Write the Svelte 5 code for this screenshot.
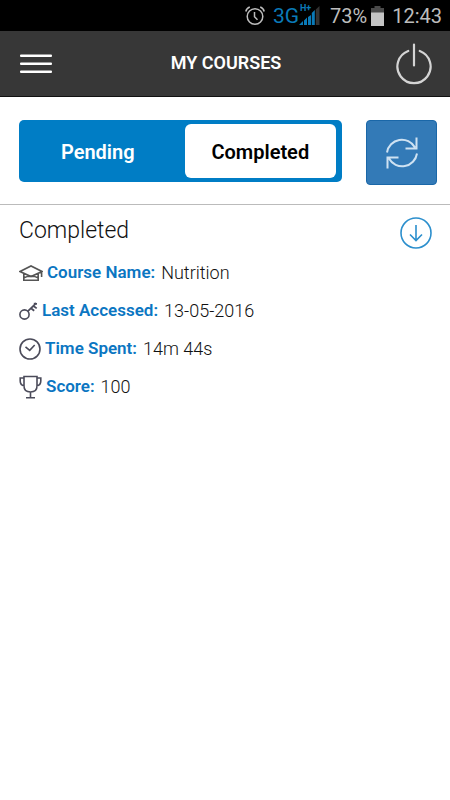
<script lang="ts">
  type Tab = "Pending" | "Completed";

  const tabs: Tab[] = ["Pending", "Completed"];

  const details = [
    { icon: "cap", label: "Course Name", value: "Nutrition" },
    { icon: "key", label: "Last Accessed", value: "13-05-2016" },
    { icon: "clock", label: "Time Spent", value: "14m 44s" },
    { icon: "trophy", label: "Score", value: "100" },
  ];

  let active = $state<Tab>("Completed");
</script>

<div class="status-bar">
  <svg class="alarm" width="20" height="20" viewBox="0 0 20 20" aria-hidden="true">
    <circle cx="10" cy="10.5" r="7.8" />
    <path d="M9.500 6v4.800l3 3M.8 5.500a6 6 0 0 1 4-4.500M19.200 5.500a6 6 0 0 0-4-4.500" />
  </svg>
  <div class="network">
    <span class="network-type">3G</span>
    <svg width="21" height="20" viewBox="0 0 21 20" aria-hidden="true">
      <path class="bar-on" d="M0 19l4-4v4zM5 14.500l3-3V19H5zM9 11l3-2V19H9zM12.800 7L15.800 4v15h-3z" />
      <path class="bar-off" d="M16.800 3.500L20.500 0v19h-3.700z" />
    </svg>
    <span class="network-mode">H+</span>
  </div>
  <span class="battery-level">73%</span>
  <svg class="battery" width="13" height="20" viewBox="0 0 13 20" aria-hidden="true">
    <path class="empty" d="M3.500 0h6v2H13v5H0V2h3.500z" />
    <path class="full" d="M0 6.500h13V20H0z" />
  </svg>
  <span>12:43</span>
</div>

<header>
  <button type="button" class="icon-btn" aria-label="Menu">
    <svg width="32" height="20" viewBox="0 0 32 20" fill="#fff">
      <rect y="0.500" width="32" height="2.600" rx="1" />
      <rect y="8.500" width="32" height="2.600" rx="1" />
      <rect y="16.500" width="32" height="2.600" rx="1" />
    </svg>
  </button>
  <h1>MY COURSES</h1>
  <button type="button" class="icon-btn" aria-label="Log out">
    <svg width="36" height="42" viewBox="0 0 36 42" fill="none" stroke="#d4d4d4" stroke-width="2.200" stroke-linecap="round">
      <path d="M18 1.500v21M12.200 8A16.600 16.600 0 1 0 23.800 8" />
    </svg>
  </button>
</header>

<div class="toolbar">
  <div class="toggle">
    {#each tabs as tab}
      <button
        type="button"
        class="tab"
        class:active={active === tab}
        aria-pressed={active === tab}
        onclick={() => (active = tab)}
      >
        {tab}
      </button>
    {/each}
  </div>
  <button type="button" class="refresh" aria-label="Refresh">
    <svg width="34" height="34" viewBox="0 0 34 34" fill="none" stroke="#cfe2f2" stroke-width="2">
      <path d="M2 16.500A15 15 0 0 1 30 11.500M31.500 1.500v11H20.500M32 17.500A15 15 0 0 1 4 22.500M2.500 32.500v-11h11" />
    </svg>
  </button>
</div>

<main>
  <div class="section-head">
    <h2>{active}</h2>
    {#if active === "Completed"}
      <button type="button" class="icon-btn" aria-label="Download">
        <svg width="32" height="32" viewBox="0 0 32 32" fill="none" stroke="#2c8fcd">
          <circle cx="16" cy="16" r="15" stroke-width="1.600" />
          <path d="M16 8v15.500M10 17.500l6 6 6-6" stroke-width="1.600" />
        </svg>
      </button>
    {/if}
  </div>

  {#if active === "Completed"}
    <ul class="details">
      {#each details as item}
        <li>
          {#if item.icon === "cap"}
            <svg width="24" height="18" viewBox="0 0 24 18" aria-hidden="true">
              <path d="M1 7.500L12 2l11 5.500-11 5zM4.800 9.500V16.200h14.400V9.500M5 13.800c3.500-2 10.500-2 14 0M22.600 7.500v5.500" stroke="#555" />
            </svg>
          {:else if item.icon === "key"}
            <svg width="19" height="20" viewBox="0 0 19 20" aria-hidden="true">
              <circle cx="5.500" cy="13.500" r="4.600" />
              <path d="M8.700 10.300L17.200 2.200M12 7.200l3.200 2.600M14.500 5l3.200 2.400M14.800 2.700l3.200.200" stroke-width="1.800" />
            </svg>
          {:else if item.icon === "clock"}
            <svg width="22" height="22" viewBox="0 0 22 22" aria-hidden="true">
              <circle cx="11" cy="11" r="10" />
              <path d="M6.500 8.800l4.200 3.500 5-5.300" />
            </svg>
          {:else}
            <svg width="23" height="24" viewBox="0 0 23 24" aria-hidden="true">
              <path d="M5 1.500h13v9.500c0 4-2.800 6-6.500 6S5 15 5 11zM5 3H1.200v3c0 3 1.300 4.500 4.200 5M18 3h3.800v3c0 3-1.300 4.500-4.200 5M11.500 17v5M7 22.800h9" />
            </svg>
          {/if}
          <strong>{item.label}:</strong>
          <span>{item.value}</span>
        </li>
      {/each}
    </ul>
  {:else}
    <p class="none">No pending courses</p>
  {/if}
</main>

<style>
  :global(body) {
    background: #fff;
    font-family: Roboto, "Liberation Sans", sans-serif;
    color: #111;
  }

  button {
    padding: 0;
    border: 0;
    background: none;
    font-family: inherit;
    cursor: pointer;
  }

  svg {
    display: block;
    flex: none;
  }

  h1,
  h2 {
    margin: 0;
  }

  .status-bar {
    display: flex;
    align-items: center;
    justify-content: flex-end;
    gap: 8px;
    height: 31px;
    padding-right: 8px;
    background: #000;
    color: #bdbdbd;
    font-size: 20px;
  }

  .alarm {
    fill: none;
    stroke: #bdbdbd;
    stroke-width: 1.5;
  }

  .network {
    position: relative;
    display: flex;
    align-items: center;
    margin-right: 2px;
    color: #0a7ab8;
  }

  .network-type {
    font-size: 21px;
    line-height: 24px;
  }

  .network-mode {
    position: absolute;
    top: 0;
    left: 27px;
    font-size: 9px;
    font-weight: 700;
    line-height: 8px;
  }

  .bar-on {
    fill: #0a7ab8;
  }

  .bar-off {
    fill: #333;
  }

  .battery-level {
    margin-right: -4px;
  }

  .empty {
    fill: #4a4a4a;
  }

  .full {
    fill: #c4c4c4;
  }

  header {
    display: grid;
    grid-template-columns: 1fr auto 1fr;
    align-items: center;
    height: 66px;
    padding: 0 18px 0 20px;
    box-sizing: border-box;
    border-bottom: 1px solid #111;
    background: #373737;
    color: #fff;
  }

  header .icon-btn:last-child {
    justify-self: end;
  }

  header .icon-btn:first-child {
    justify-self: start;
  }

  h1 {
    padding-bottom: 2px;
    font-size: 18px;
    font-weight: 600;
  }

  .toolbar {
    display: flex;
    align-items: flex-start;
    gap: 24px;
    padding: 23px 13px 19px 19px;
    border-bottom: 1px solid #bbb;
  }

  .toggle {
    flex: 1;
    display: grid;
    grid-template-columns: 51fr 49fr;
    gap: 8px;
    height: 62px;
    padding: 4px 6px 4px 0;
    box-sizing: border-box;
    border-radius: 5px;
    background: #007dc5;
  }

  .tab {
    padding-top: 2px;
    border-radius: 6px;
    color: #fff;
    font-size: 20px;
    font-weight: 600;
  }

  .tab.active {
    background: #fff;
    color: #000;
  }

  .refresh {
    display: flex;
    align-items: center;
    justify-content: center;
    width: 71px;
    height: 65px;
    border: 1px solid #1a67a8;
    border-radius: 4px;
    background: #337ab7;
  }

  main {
    padding: 0 18px 20px 19px;
  }

  .section-head {
    display: flex;
    align-items: center;
    justify-content: space-between;
    height: 48px;
    padding-top: 2px;
  }

  h2 {
    font-size: 23px;
    font-weight: 300;
    line-height: 32px;
  }

  .section-head .icon-btn {
    margin-bottom: -4px;
  }

  .details {
    margin: -2px 0 0;
    padding: 0;
    list-style: none;
  }

  .details li {
    display: flex;
    align-items: center;
    gap: 4px;
    height: 38px;
    font-size: 18px;
    font-weight: 300;
  }

  .details svg {
    margin-top: 2px;
    fill: none;
    stroke: #4b4b5a;
    stroke-width: 1.6;
  }

  .details strong {
    margin-right: 2px;
    color: #0b76c2;
    font-size: 17px;
    font-weight: 600;
  }

  .none {
    margin: 8px 0;
    font-size: 18px;
  }
</style>
